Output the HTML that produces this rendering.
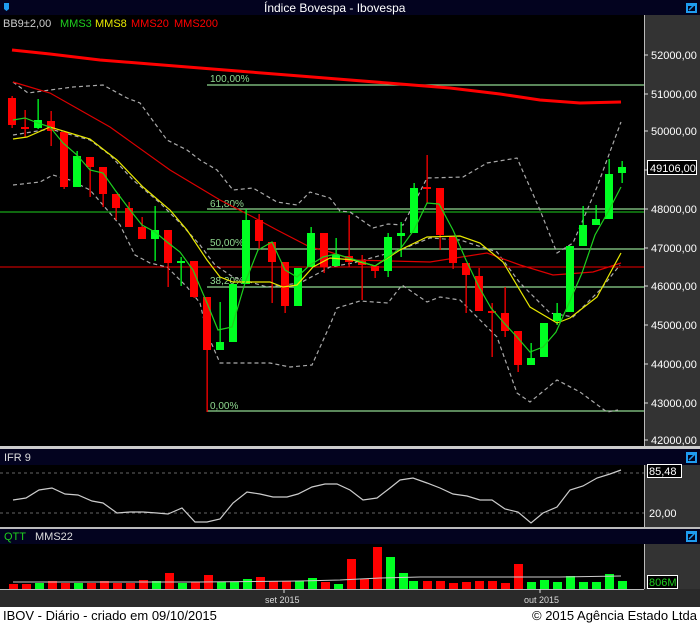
<!DOCTYPE html>
<html><head><meta charset="utf-8"><style>
html,body{margin:0;padding:0;background:#000;width:700px;height:623px;overflow:hidden}
svg{display:block}
text{font-family:"Liberation Sans",sans-serif}
</style></head><body>
<svg id="s" width="700" height="623" viewBox="0 0 700 623" xmlns="http://www.w3.org/2000/svg">
<rect x="0" y="0" width="700" height="623" fill="#000"/>
<rect x="0" y="0" width="700" height="15" fill="#03031f"/>
<path d="M4 3 L9 3 L9 9 L6.5 11 L4 9 Z" fill="#1e9cf0"/>
<text x="264" y="12" font-size="12" fill="#fff">Índice Bovespa - Ibovespa</text>
<g><rect x="686" y="3" width="11" height="10" fill="#1e9cf0"/><rect x="688" y="6" width="7" height="5" fill="#03031f"/><path d="M689 10 L695 4" stroke="#1e9cf0" stroke-width="1.5"/></g>
<rect x="645" y="15" width="55" height="431" fill="#333"/>
<line x1="644.5" y1="15" x2="644.5" y2="446" stroke="#bbb" stroke-width="1"/>
<g font-size="11" fill="#fff">
<text x="651" y="59">52000,00</text>
<text x="651" y="98">51000,00</text>
<text x="651" y="135">50000,00</text>
<text x="651" y="213">48000,00</text>
<text x="651" y="252">47000,00</text>
<text x="651" y="290">46000,00</text>
<text x="651" y="329">45000,00</text>
<text x="651" y="368">44000,00</text>
<text x="651" y="407">43000,00</text>
<text x="651" y="444">42000,00</text>
</g>
<g stroke="#ddd">
<line x1="644" y1="55" x2="648" y2="55"/><line x1="644" y1="94" x2="648" y2="94"/><line x1="644" y1="131" x2="648" y2="131"/><line x1="644" y1="170" x2="648" y2="170"/><line x1="644" y1="209" x2="648" y2="209"/><line x1="644" y1="248" x2="648" y2="248"/><line x1="644" y1="286" x2="648" y2="286"/><line x1="644" y1="325" x2="648" y2="325"/><line x1="644" y1="364" x2="648" y2="364"/><line x1="644" y1="403" x2="648" y2="403"/><line x1="644" y1="440" x2="648" y2="440"/>
</g>
<rect x="647.5" y="160.5" width="49" height="14" fill="#000" stroke="#fff"/>
<text x="650" y="172" font-size="11" fill="#fff">49106,00</text>
<g font-size="11">
<text x="3" y="27" fill="#ccc">BB9±2,00</text>
<text x="60" y="27" fill="#1ed01e">MMS3</text>
<text x="95" y="27" fill="#e8e800">MMS8</text>
<text x="131" y="27" fill="#f00">MMS20</text>
<text x="174" y="27" fill="#f00">MMS200</text>
</g>
<g stroke="#8fd88f" stroke-width="1.3">
<line x1="207" y1="85" x2="644" y2="85"/>
<line x1="207" y1="209" x2="644" y2="209"/>
<line x1="207" y1="249" x2="644" y2="249"/>
<line x1="207" y1="287" x2="644" y2="287"/>
<line x1="207" y1="411" x2="644" y2="411"/>
</g>
<line x1="0" y1="212" x2="644" y2="212" stroke="#1ed01e" stroke-width="1"/>
<line x1="0" y1="267" x2="644" y2="267" stroke="#e00" stroke-width="1"/>
<g font-size="10" fill="#8fd88f">
<text x="210" y="82">100,00%</text>
<text x="210" y="207">61,80%</text>
<text x="210" y="246">50,00%</text>
<text x="210" y="284">38,20%</text>
<text x="210" y="409">0,00%</text>
</g>
<g fill="none" stroke="#aaa" stroke-width="1.2" stroke-dasharray="4,3">
<polyline points="13,82 28,93 50,90 73,87 103,85 127,98 140,103 167,140 187,150 200,160 217,170 233,190 253,188 277,202 297,205 310,192 330,198 340,211 350,212 373,228 388,224 403,225 427,178 463,177 487,163 517,158 540,210 557,253 573,243 597,187 621,122"/>
<polyline points="13,185 40,182 53,175 70,180 90,190 103,205 120,225 135,255 150,263 167,267 187,287 200,303 207,333 220,363 270,363 290,367 312,365 330,325 337,308 360,301 388,303 402,285 427,302 440,297 460,300 480,320 497,337 517,393 530,402 557,380 580,392 607,412 618,410"/>
<polyline points="13,135 50,129 90,140 110,155 133,180 160,203 180,223 200,245 215,265 233,277 267,287 300,283 330,267 353,263 400,250 430,238 460,240 497,252 520,283 550,313 573,317 600,290 620,265"/>
</g>
<polyline fill="none" stroke="#f00" stroke-width="3" points="12,50 50,54 100,60 150,64 200,68 250,72 300,76 350,80 400,84 450,88 500,94 540,100 580,103 621,102"/>
<polyline fill="none" stroke="#d00" stroke-width="1.2" points="13,82 50,93 110,127 170,170 220,200 253,217 277,230 310,247 330,252 353,260 430,262 487,253 520,265 553,275 593,272 621,263"/>
<g id="candles"></g>
<polyline fill="none" stroke="#e8e800" stroke-width="1.2" points="13,139 27,137 50,127 90,139 117,160 143,187 170,210 187,230 207,260 220,277 233,282 253,282 270,282 283,287 297,285 313,267 330,258 353,260 375,266 400,250 427,237 460,236 480,243 503,262 530,307 557,323 570,318 597,297 621,253"/>
<polyline fill="none" stroke="#1ed01e" stroke-width="1.2" points="13,120 25,118 38,123 50,127 63,143 77,155 90,170 103,173 115,190 130,210 142,225 155,232 167,242 180,252 193,270 207,303 218,330 232,327 245,283 258,250 272,242 285,270 297,277 310,265 323,257 336,254 349,258 362,262 375,266 388,257 401,248 414,230 427,203 439,204 453,230 466,260 479,287 491,308 504,323 517,337 530,352 543,347 556,332 569,303 582,273 595,235 608,212 621,187"/>

<rect x="0" y="446" width="700" height="3" fill="#ccc"/>
<rect x="0" y="449" width="700" height="16" fill="#03031f"/>
<text x="4" y="461" font-size="11" fill="#ddd">IFR 9</text>
<g><rect x="686" y="452" width="11" height="11" fill="#1e9cf0"/><rect x="688" y="455" width="7" height="6" fill="#03031f"/><path d="M689 460 L695 454" stroke="#1e9cf0" stroke-width="1.5"/></g>
<rect x="645" y="465" width="55" height="62" fill="#333"/>
<line x1="644.5" y1="465" x2="644.5" y2="527" stroke="#bbb"/>
<g stroke="#666" stroke-dasharray="3,3"><line x1="0" y1="473" x2="644" y2="473"/><line x1="0" y1="513" x2="644" y2="513"/></g>
<polyline fill="none" stroke="#ccc" stroke-width="1.2" points="13,500 26,498 39,490 52,488 65,494 78,495 92,501 103,503 117,513 130,512 143,512 157,513 168,514 182,508 195,522 207,522 220,519 233,503 247,492 260,494 273,497 287,497 298,494 312,487 325,484 337,484 350,490 363,500 377,498 390,488 400,480 413,478 427,483 440,488 453,494 467,496 480,500 492,500 505,509 518,512 531,523 543,513 557,507 570,490 583,486 597,478 610,474 621,470"/>
<rect x="647.5" y="464.5" width="34" height="13" fill="#000" stroke="#fff"/>
<text x="649" y="475" font-size="11" fill="#fff">85,48</text>
<text x="649" y="517" font-size="11" fill="#fff">20,00</text>
<rect x="0" y="527" width="700" height="2" fill="#bbb"/>
<rect x="0" y="529" width="700" height="15" fill="#03031f"/>
<text x="4" y="540" font-size="11" fill="#1ed01e">QTT</text>
<text x="35" y="540" font-size="11" fill="#ddd">MMS22</text>
<g><rect x="686" y="531" width="11" height="11" fill="#1e9cf0"/><rect x="688" y="534" width="7" height="6" fill="#03031f"/><path d="M689 539 L695 533" stroke="#1e9cf0" stroke-width="1.5"/></g>
<rect x="645" y="544" width="55" height="45" fill="#333"/>
<line x1="644.5" y1="544" x2="644.5" y2="589" stroke="#bbb"/>
<g id="vols"></g>
<polyline fill="none" stroke="#ccc" stroke-width="1" points="13,582 100,582 200,582 300,581 340,580 380,578 420,577 500,577 560,577 621,576"/>
<rect x="647.5" y="575.5" width="30" height="13" fill="#000" stroke="#fff"/>
<text x="649" y="586" font-size="11" fill="#1ed01e">806M</text>
<rect x="0" y="589" width="700" height="18" fill="#2a2a2a"/>
<line x1="0" y1="589.5" x2="644" y2="589.5" stroke="#bbb"/>
<line x1="284" y1="589" x2="284" y2="593" stroke="#ddd"/>
<line x1="540" y1="589" x2="540" y2="593" stroke="#ddd"/>
<text x="265" y="603" font-size="9" fill="#ddd">set 2015</text>
<text x="524" y="603" font-size="9" fill="#ddd">out 2015</text>
<rect x="0" y="607" width="700" height="16" fill="#fff"/>
<text x="3" y="620" font-size="13" fill="#000">IBOV - Diário - criado em 09/10/2015</text>
<text x="697" y="620" font-size="13" fill="#000" text-anchor="end">© 2015 Agência Estado Ltda</text>
</svg>
<script>
var C=[[12,98,125,96,128,0],[25,127,129,110,137,0],[38,120,128,99,129,1],[51,121,131,111,146,0],[64,132,187,132,189,0],[77,156,187,151,187,1],[90,157,167,157,197,0],[103,167,194,167,207,0],[116,194,208,194,220,0],[129,208,227,202,227,0],[142,227,239,217,239,0],[155,230,239,206,261,1],[168,230,263,230,287,0],[181,261,263,257,286,1],[194,261,297,261,298,0],[207,297,350,297,412,0],[220,342,350,302,350,1],[233,284,342,284,342,1],[246,220,284,209,284,1],[259,220,241,214,250,0],[272,242,262,242,303,0],[285,262,306,262,313,0],[298,268,306,268,306,1],[311,233,267,227,267,1],[324,233,267,233,273,0],[336,255,266,238,266,1],[349,256,262,215,267,0],[362,261,265,255,300,0],[375,266,271,266,278,0],[388,237,271,233,277,1],[401,233,236,222,257,1],[414,188,233,183,233,1],[427,187,189,155,203,0],[440,188,235,188,250,0],[453,237,263,237,269,0],[466,263,275,263,313,0],[479,276,311,268,311,0],[492,311,313,303,357,0],[505,313,331,287,337,0],[518,331,365,331,372,0],[531,358,365,343,365,1],[544,323,357,323,357,1],[557,313,321,303,325,1],[570,246,312,246,312,1],[583,225,246,206,246,1],[596,219,225,205,225,1],[609,174,219,159,219,1],[622,167,173,161,183,1]];
var V=[584,584,583,581,583,583,583,581,583,583,580,581,573,583,582,575,582,582,579,577,581,581,581,578,582,584,559,579,547,557,573,581,581,581,583,582,581,581,583,564,582,580,582,576,582,582,574,581];
var VC=[0,0,1,0,0,1,0,0,0,0,0,1,0,1,0,0,1,1,1,0,0,0,1,1,0,1,0,0,0,1,1,1,0,0,0,0,0,0,0,0,1,1,1,1,1,1,1,1];
var VX=[13,26,39,52,65,78,91,104,117,130,143,156,169,182,195,208,221,234,247,260,273,286,299,312,325,338,351,364,377,390,403,413,427,440,453,466,479,492,505,518,531,544,557,570,583,596,609,622];
var ns="http://www.w3.org/2000/svg",g=document.getElementById("candles"),vg=document.getElementById("vols");
function r(p,x,y,w,h,f){var e=document.createElementNS(ns,"rect");e.setAttribute("x",x);e.setAttribute("y",y);e.setAttribute("width",w);e.setAttribute("height",Math.max(h,2));e.setAttribute("fill",f);p.appendChild(e);}
C.forEach(function(c){var f=c[5]?"#00ff22":"#ff0000";r(g,c[0]-0.5,c[3],1.3,c[4]-c[3],f);r(g,c[0]-4,c[1],8,c[2]-c[1],f);});
V.forEach(function(y,i){r(vg,VX[i]-4,y,9,589-y,VC[i]?"#00ff22":"#ff0000");});
</script>
</body></html>
